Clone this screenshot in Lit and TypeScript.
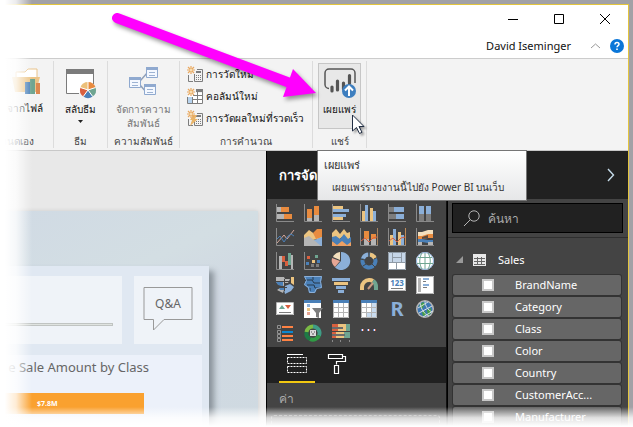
import { LitElement, html, css, svg } from "lit";
import { customElement } from "lit/decorators.js";

type Shape = [fill: string, d: string, stroke?: string, width?: number];

const AXIS: Shape = ["none", "M.5 0v17.5H18", "#8a8a8a"];
const OR = "#e88b3f";
const GR = "#b5b5b5";
const DG = "#7d7d7d";
const BL = "#8bafd8";
const DB = "#4a80b8";
const YE = "#ecc480";
const GN = "#6fa591";
const RE = "#d9603f";

const VISUALS: { name: string; shapes: Shape[] }[] = [
  { name: "Stacked bar chart", shapes: [AXIS, [GR, "M1 3h4v5H1zM1 10h7v5H1z"], [OR, "M5 3h8v5H5zM8 10h8v5H8z"]] },
  { name: "Stacked column chart", shapes: [AXIS, [OR, "M3 5h5v9H3zM10 2h5v9h-5z"], [GR, "M3 14h5v3H3zM10 11h5v6h-5z"]] },
  { name: "Clustered bar chart", shapes: [AXIS, [YE, "M1 2h10v3H1zM1 13h10v3H1z"], [BL, "M1 5h16v3H1zM1 10h13v3H1z"]] },
  { name: "Clustered column chart", shapes: [AXIS, [YE, "M2 7h3v10H2zM10 4h3v13h-3z"], [BL, "M5 1h3v16H5zM13 7h3v10h-3z"]] },
  { name: "100% stacked bar chart", shapes: [AXIS, [DG, "M1 3h5v5H1zM1 10h7v5H1z"], [BL, "M6 3h10v5H6zM8 10h8v5H8z"]] },
  { name: "100% stacked column chart", shapes: [AXIS, [BL, "M3 2h5v8H3zM10 2h5v8h-5z"], [DG, "M3 10h5v7H3zM10 10h5v7h-5z"]] },
  { name: "Line chart", shapes: [AXIS, ["none", "M1 15l7-8 3 4 7-9", "#d5a79a", 1], ["none", "M1 11l3-3 4 6 4-6 3-2 3 2", DB, 1]] },
  { name: "Area chart", shapes: [[YE, "M0 7l5-5 7 5 6-5v8L0 14z"], [OR, "M9 5l4-4h5v8l-6 2z"], [BL, "M0 12l8 1 10-4v9H0z"], [GR, "M0 10l5-2 12 10H0z"]] },
  { name: "Stacked area chart", shapes: [["#eda063", "M0 13l5 3 5-4 5 3 4-2v5H0z"], [YE, "M0 5l4-4 4 5 4-5 3 4 3-1v6l-4 3-4-4-5 4-5-4z"], [DB, "M0 9l4-1 4 3 4-5 4 5 3-2v5l-4 3-5-4-5 4-5-4z"]] },
  { name: "Line and stacked column chart", shapes: [AXIS, [OR, "M4 3h5v8H4zM11 6h5v5h-5z"], [GR, "M4 11h5v6H4zM11 11h5v6h-5z"], ["none", "M1 13l4-3 4 4 4-4 4-1", RE], ["none", "M17.500 0v17", "#a7835e"]] },
  { name: "Line and clustered column chart", shapes: [AXIS, [YE, "M2 7h3v10H2zM10 4h3v13h-3z"], [BL, "M5 1h3v16H5zM13 7h3v10h-3z"], ["none", "M1 13l4-3 4 4 4-4 4-1", RE], ["none", "M17.500 0v17", "#c08a55"]] },
  { name: "Ribbon chart", shapes: [AXIS, ["#f3dfbd", "M2 4h4l6-2h5v5h-5L6 9H2z"], [OR, "M2 8h4l6-2h5v4h-5l-6 1H2z"], [DB, "M2 11h4l6 1h5v3h-5l-6-1H2z"], ["#5d4a3c", "M6 9l6-2v3l-6 1z"], [GR, "M2 14h4v3H2zM12 14h5v3h-5z"]] },
  { name: "Waterfall chart", shapes: [AXIS, [GR, "M3 4h3v13H3zM15 3h2v14h-2z"], [RE, "M6 4h3v6H6zM9 9h3v5H9z"], [GN, "M12 1h3v12h-3z"]] },
  { name: "Scatter chart", shapes: [AXIS, [RE, "M3 4h3v3H3z"], [GN, "M11 3h3v3h-3z"], [DB, "M2 10h3v3H2zM13 8h3v3h-3z"], [YE, "M8 8h3v3H8z"], [DG, "M7 12h3v3H7zM12 12h3v3h-3z"]] },
  { name: "Pie chart", shapes: [[BL, "M9 0a9 9 0 1 1-6 15.500L9 9z"], ["#f3dfbd", "M8 0v8L1 5a9 9 0 0 1 7-5z"], ["#e6a695", "M0 6l8 3-5 6A9 9 0 0 1 0 6z"]] },
  { name: "Donut chart", shapes: [["none", "M9 2.500A6.500 6.500 0 1 1 3 6.500", DB, 4], ["none", "M3 6.500A6.500 6.500 0 0 1 8.500 2.500", BL, 4], ["none", "M10 2.500A6.500 6.500 0 0 1 15 6.500", YE, 4], ["none", "M9 0v5M14 7l4-2M3 14l3-2M15 15l-3-3M0 7l5 1", "#444"]] },
  { name: "Treemap", shapes: [["#fff", "M0 0h18v18H0z"], ["#c6d6e8", "M1 1h3v9H1zM5 1h8v4H5zM5 6h8v4H5zM14 1h3v9h-3z"], ["none", "M.5.5h17v17H.5zM4.500 1v9M5 5.500h8M13.500 1v9M1 10.500h16M8.500 11v6", "#8f9aa5"]] },
  { name: "Map", shapes: [["#fff", "M9 0a9 9 0 1 0 0 18A9 9 0 0 0 9 0z"], ["none", "M9 .5a8.500 8.500 0 1 0 0 17 8.500 8.500 0 0 0 0-17z", BL], ["none", "M2 5.500h14M1 11.500h16M9 1v16M6 1C3 6 3 12 6 17M12 1c3 5 3 11 0 16", GN]] },
  { name: "Filled map", shapes: [[GR, "M0 1h8l1 2h5l-2 4H9l-1 3-5-1-3-3zM1 14l3-2 4 2-1 3z"], [DB, "M0 6h7v4l-5-1zM3 12h6v2H4z"], [BL, "M9 10l5-2 4 3-3 4-6 3-1-4z"], [YE, "M15 1h3v8l-3-2z"], ["none", "M0 5.500h13M2 11.500h9M8.500 3v12", "#444"]] },
  { name: "Shape map", shapes: [[DB, "M0 0h18l-1 6 1 6-5 1-2 4H5l-1-5-4-3 2-5z"], ["none", "M1 4h7l2 3h7M3 9h7l1 3h5M9 1v3M6 12v3", "#27394b"], ["none", "M.5.5h17l-1 5 1 6-5 1-2 4h-5l-1-5-4-3 2-4z", BL]] },
  { name: "Funnel", shapes: [[BL, "M0 2h18v3H0zM4 10h10v3H4zM6 14h6v3H6z"], [YE, "M2 6h14v3H2z"]] },
  { name: "Gauge", shapes: [["none", "M2 14v-3a7 7 0 0 1 7-7", YE, 4], ["none", "M9 4a7 7 0 0 1 4 1", YE, 4], ["none", "M13 5a7 7 0 0 1 3 6v3", GN, 4], ["none", "M8 13L13 7", "#c99b80", 2]] },
  { name: "Card", shapes: [["#fff", "M0 3h18v12H0z"], ["none", "M.5 2.500h17v12H.5z", GR], ["none", "M3 12.500h12", DG]] },
  { name: "Multi-row card", shapes: [["#fff", "M0 0h18v18H0z"], ["none", "M.5.5h17v17H.5z", GR], [GR, "M2 2h3v14H2z"], [BL, "M7 2h6v2H7zM7 8h6v2H7z"], [DG, "M7 5h3v1H7zM7 11h4v1H7z"]] },
  { name: "KPI", shapes: [["#fff", "M0 3h18v12H0z"], ["none", "M.5 2.500h17v12H.5z", GR], [GN, "M3 9l3-4 3 4z"], [RE, "M9 5h6l-3 4z"], ["none", "M3 12.500h12", DG]] },
  { name: "Slicer", shapes: [["#fff", "M0 0h17v18H0z"], [DB, "M0 0h17v3H0z"], [BL, "M3 4h3v3H3z"], [YE, "M3 8h3v3H3z"], ["#e6a695", "M3 12h3v3H3z"], [DG, "M8 8h11l-4 5v5l-3-1v-4z"]] },
  { name: "Table", shapes: [["#fff", "M1 0h16v18H1z"], [DB, "M1 0h16v3H1z"], ["none", "M1.500 3v14.500h15V3M6.500 3v14M11.500 3v14M2 7.500h14M2 12.500h14", GR]] },
  { name: "Matrix", shapes: [["#fff", "M1 0h16v18H1z"], ["#c9dcf0", "M12 3h5v15h-5zM6 13h6v5H6z"], [DB, "M1 0h16v3H1z"], ["none", "M1.500 3v14.500h15V3M6.500 3v14M11.500 3v14M2 7.500h14M2 12.500h14", GR]] },
  { name: "R script visual", shapes: [] },
  { name: "ArcGIS map", shapes: [[GR, "M9 0a9 9 0 1 0 0 18A9 9 0 0 0 9 0z"], ["#3c77b4", "M9 1.500a7.500 7.500 0 1 0 0 15 7.500 7.500 0 0 0 0-15z"], ["#46a044", "M3 6l4-4 2 2-3 5zM11 10l4-2v5l-3 3zM6 12l3-1 1 4-3 1z"], ["none", "M2 8l10-6M3 13L16 6M7 17l10-6M4 3c1 6 4 11 9 13M9 1c0 5 3 9 7 11", "#d5dde3"]] },
  { name: "Chiclet slicer", shapes: [["none", "M1.500 1.500h3v3h-3zM1.500 6.500h3v3h-3zM1.500 10.500h3v3h-3zM1.500 14.500h3v3h-3z", "#909090"], ["#ff8243", "M6 2h11v2H6zM6 15h11v2H6z"], ["#0c87d0", "M6 7h11v2H6z"], ["#ff8243", "M6 11h11v2H6z"]] },
  { name: "Infographic donut", shapes: [["none", "M9 2.500a6.500 6.500 0 0 1 6 9", "#3f9c87", 4], ["none", "M15 11.500a6.500 6.500 0 0 1-9 3.500", "#2f9a44", 4], ["none", "M6 15A6.500 6.500 0 0 1 2.500 8", "#1d7a45", 4], ["none", "M2.500 8A6.500 6.500 0 0 1 9 2.500", "#7bbb45", 4], ["#d8d8d8", "M6 6h6v6H6z"], ["none", "M7 8h1m2 0h1m-3 2h2", "#555"]] },
  { name: "Bullet chart", shapes: [[RE, "M0 0h6v7H0zM0 8h4v6H0z"], [YE, "M6 0h8v7H6zM4 8h8v6H4z"], [GN, "M14 0h4v7h-4zM12 8h6v6h-6z"], ["#6b6b6b", "M0 3h11v2H0zM0 10h13v2H0z"], ["none", "M.5 16v2M8.500 16v2M17.500 16v2", "#8a8a8a"]] },
  { name: "More visuals", shapes: [["#f0f0f0", "M1 5h3v2H1zM7 5h3v2H7zM13 5h3v2h-3z"], ["#5b7fd0", "M1 5h1v2H1zM7 5h1v2H7zM13 5h1v2h-1z"], ["#c0594a", "M3 5h1v2H3zM9 5h1v2H9zM15 5h1v2h-1z"]] },
];

const FIELDS = ["BrandName", "Category", "Class", "Color", "Country", "CustomerAcc...", "Manufacturer"];

const STAR = svg`<path d="M4 0v3M4 5v3M0 4h3M5 4h3M1 1l2 2M7 1L5 3M1 7l2-2M7 7L5 5" stroke="#e9a860" stroke-width="1.200"/><circle cx="4" cy="4" r="1.500" fill="#fbe7c4" stroke="#e9b468" stroke-width=".6"/>`;
const CALC = svg`<path d="M1.500 9v6.500H6M10 3.500h5.500v12h-8V8" fill="none" stroke="#7d7d7d"/><path d="M9 5h5v2H9zM9 9h1v1H9zM11 9h1v1h-1zM13 9h1v1h-1zM9 11h1v1H9zM11 11h1v1h-1zM13 11h1v1h-1zM9 13h1v1H9zM11 13h1v1h-1zM13 13h1v1h-1z" fill="#7d7d7d"/>`;

const reset = css`
  * { box-sizing: border-box; }
  button {
    font: inherit;
    color: inherit;
    background: none;
    border: 0;
    padding: 0;
    margin: 0;
  }
  svg { display: block; flex: none; overflow: visible; }
`;

@customElement("title-bar")
class TitleBar extends LitElement {
  static styles = [reset, css`
    :host { display: block; background: #fff; color: #111; }
    .controls { display: flex; justify-content: flex-end; height: 28px; }
    .controls button { width: 46px; display: grid; place-items: center; }
    .account { display: flex; align-items: center; justify-content: flex-end; height: 25px; padding-right: 4px; }
    .user { font-size: 11px; line-height: 16px; }
    .collapse { margin: 0 10px 0 20px; }
    .help { width: 14px; height: 14px; }
  `];

  render() {
    return html`
      <div class="controls">
        <button aria-label="Minimize"><svg width="10" height="10"><path d="M0 5.500h10" stroke="#000"/></svg></button>
        <button aria-label="Maximize"><svg width="10" height="10"><path d="M.5.5h9v9h-9z" fill="none" stroke="#000"/></svg></button>
        <button aria-label="Close"><svg width="10" height="10"><path d="M0 0l10 10M10 0L0 10" stroke="#000"/></svg></button>
      </div>
      <div class="account">
        <button class="user">David Iseminger</button>
        <button class="collapse" aria-label="Collapse ribbon"><svg width="9" height="5"><path d="M0 5l4.500-4L9 5" fill="none" stroke="#999"/></svg></button>
        <button class="help" aria-label="Help"><svg width="14" height="14" viewBox="0 0 14 14"><circle cx="7" cy="7" r="7" fill="#0a76d8"/><path d="M5 5.500C5 3 9 3 9 5.200 9 6.500 7 6.700 7 8.300" fill="none" stroke="#fff" stroke-width="1.500"/><path d="M6.200 9.500h1.600v1.600H6.200z" fill="#fff"/></svg></button>
      </div>`;
  }
}

@customElement("ribbon-bar")
class RibbonBar extends LitElement {
  static styles = [reset, css`
    :host {
      display: flex;
      height: 93px;
      background: #f3f3f3;
      border-top: 1px solid #ccc;
      border-bottom: 1px solid #c8c8c8;
      color: #111;
      font-size: 10px;
      line-height: 14px;
      white-space: nowrap;
    }
    .group {
      display: flex;
      flex-direction: column;
      flex: none;
      align-items: center;
      justify-content: space-between;
      padding: 4px 0 0;
      margin: 2px 0;
      border-right: 1px solid #dcdcdc;
    }
    .label { color: #444; }
    .custom { width: 54px; align-items: flex-end; }
    .custom .label { padding-right: 19px; }
    .custom .tool { padding-right: 10px; }
    .theme { width: 54px; }
    .relations { width: 72px; }
    .relations .tool { color: #777; }
    .calc { width: 133px; }
    .share { width: 54px; position: relative; padding-top: 2px; }
    .tool { display: flex; flex-direction: column; align-items: center; padding-top: 4px; }
    .tool svg { margin-bottom: 4px; }
    .custom .tool { align-items: flex-end; }
    .tool .caret { margin: 4px 0 0; }
    .list { display: flex; flex-direction: column; gap: 6px; align-self: stretch; padding: 1px 0 0 7px; }
    .list button { display: flex; align-items: center; gap: 3px; height: 16px; }
    .publish {
      width: 43px;
      height: 66px;
      padding-top: 4px;
      background: #e8e8e8;
      border: 1px solid #c6c6c6;
    }
    .tooltip {
      position: absolute;
      z-index: 2;
      top: 89px;
      left: 4px;
      width: 210px;
      height: 51px;
      padding: 7px 6px;
      background: linear-gradient(#fff, #e6e7e8);
      border: 1px solid #767676;
      color: #333;
      font-size: 11px;
      line-height: 14px;
    }
    .tooltip p { margin: 0; }
    .tooltip .detail { margin-top: 8px; padding-left: 8px; font-size: 10px; }
  `];

  render() {
    return html`
      <section class="group custom">
        <button class="tool">
          <svg width="31" height="28" viewBox="0 0 31 28"><path d="M4 9V3h9l3-3h9v9" fill="#fff" stroke="#e9c38a"/><path d="M0 8h28l-4 15H3z" fill="#ecc588"/><path d="M13 13h5v12h-5z" fill="#4a80b8"/><path d="M18 10h5v15h-5z" fill="#6fa591"/><path d="M24 14h4v11h-4z" fill="#dc8850"/></svg>
          จากไฟล์
        </button>
        <span class="label">หนดเอง</span>
      </section>
      <section class="group theme">
        <button class="tool">
          <svg width="30" height="29" viewBox="0 0 30 29"><path d="M.5.5h27V15M.5.500v24H13" fill="#fff" stroke="#7b7b7b"/><path d="M0 0h28v5H0z" fill="#7b7b7b"/><path d="M1 5h26v10L13 24H1z" fill="#fff"/>
            <path d="M22 21V13a8 8 0 0 1 7.600 5.500z" fill="#e88b3f"/><path d="M22 21l7.600-2.500a8 8 0 0 1-2.900 9z" fill="#6fa591"/><path d="M22 21l4.700 6.500a8 8 0 0 1-9.400 0z" fill="#4a80b8"/><path d="M22 21l-4.700 6.500a8 8 0 0 1-2.900-9z" fill="#d9603f"/><path d="M22 21l-7.600-2.500A8 8 0 0 1 22 13z" fill="#ecc07a"/><path d="M22 21v-8M22 21l7.600-2.500M22 21l4.700 6.500M22 21l-4.700 6.500M22 21l-7.600-2.500" stroke="#fff"/></svg>
          สลับธีม
          <svg class="caret" width="5" height="3"><path d="M0 0h5L2.500 3z" fill="#222"/></svg>
        </button>
        <span class="label">ธีม</span>
      </section>
      <section class="group relations">
        <button class="tool">
          <svg width="30" height="29" viewBox="0 0 30 29"><path d="M11 12l8-9M11 16l7 8" stroke="#8f9fb8" stroke-width="1.500"/><g fill="#f4f8ff" stroke="#8fa9cf"><path d="M.5 8.500h11v10H.5zM17.500-1.500h11v10h-11zM15.500 15.500h11v10h-11z"/></g><path d="M0 8h12v3H0zM17-2h12v3H17zM15 15h12v3H15z" fill="#8fa9cf"/><path d="M3 13.500h6M3 16.500h6M20 3.500h6M20 6.500h6M18 20.500h6M18 23.500h6" stroke="#9db3d3"/></svg>
          <span>จัดการความ<br>สัมพันธ์</span>
        </button>
        <span class="label">ความสัมพันธ์</span>
      </section>
      <section class="group calc">
        <div class="list">
          <button><svg width="16" height="16" viewBox="0 0 16 16">${CALC}${STAR}</svg>การวัดใหม่</button>
          <button><svg width="16" height="16" viewBox="0 0 16 16"><path d="M1 5h15v11H1z" fill="#fff"/><path d="M1 9h5v7H1z" fill="#b7d3ee"/><path d="M.5 9v6.500h15V1.500H9M5.500 9v6M10.500 4v11M6 7.500h9M6 11.500h9" fill="none" stroke="#7d7d7d"/><path d="M9 1h7v3H9z" fill="#7d7d7d"/>${STAR}</svg>คอลัมน์ใหม่</button>
          <button><svg width="16" height="16" viewBox="0 0 16 16">${CALC}<path d="M6 5h4L8 9h3l-8 7 2-6H3z" fill="#e9b468"/>${STAR}</svg>การวัดผลใหม่ที่รวดเร็ว</button>
        </div>
        <span class="label">การคำนวณ</span>
      </section>
      <section class="group share">
        <button class="tool publish" aria-describedby="publish-tip">
          <svg width="32" height="30" viewBox="0 0 32 30"><path d="M5 20.500a4 4 0 0 1-4-4V5a4 4 0 0 1 4-4h22a4 4 0 0 1 4 4v10" fill="none" stroke="#555" stroke-width="1.500"/><path d="M8 19v4M13.500 13v9M19.500 15v6M25.500 7.500v8" stroke="#555" stroke-width="3.200" stroke-linecap="round"/><circle cx="25" cy="23" r="7" fill="#3d7ebf"/><path d="M25 28v-9M21 22.500l4-4 4 4" fill="none" stroke="#fff" stroke-width="2"/></svg>
          เผยแพร่
        </button>
        <span class="label">แชร์</span>
        <div class="tooltip" id="publish-tip" role="tooltip">
          <p>เผยแพร่</p>
          <p class="detail">เผยแพร่รายงานนี้ไปยัง Power BI บนเว็บ</p>
        </div>
      </section>`;
  }
}

@customElement("report-canvas")
class ReportCanvas extends LitElement {
  static styles = [reset, css`
    :host { display: flex; background: #e8e8e8; padding: 60px 8px 0 0; overflow: hidden; }
    .page {
      flex: 1;
      display: flex;
      padding: 55px 49px 0 0;
      background: linear-gradient(155deg, #d0dae4, #d3dee3 35%, #d0d8e2 55%, #cfdae1);
      box-shadow: 0 0 4px #ccc;
    }
    .board {
      flex: 1;
      display: flex;
      flex-direction: column;
      gap: 11px;
      padding: 10px 7px 0 0;
      background: #e0e8f2;
      box-shadow: 5px 5px 6px #8a939b;
      color: #666;
    }
    .row { display: flex; gap: 12px; }
    .tile { height: 68px; background: #eff3f8; }
    .wide { flex: 1; display: flex; align-items: flex-end; padding: 0 9px 18px 0; }
    .rule { flex: 1; height: 3px; background: #dfe3e0; border: 1px solid #c0c4c2; }
    .qa { width: 68px; position: relative; padding: 10px 9px; }
    .qa svg { width: 50px; height: 46px; }
    .qa span { position: absolute; top: 18px; left: 0; width: 68px; text-align: center; font-size: 12px; line-height: 20px; }
    .chart { flex: 1; background: #ecf1fa; }
    h2 {
      display: flex;
      justify-content: flex-end;
      margin: 0;
      padding: 2px 53px 0 0;
      white-space: nowrap;
      font-size: 13px;
      line-height: 20px;
      font-weight: 400;
    }
    .bar { margin: 16px 58px 0 0; height: 21px; background: #faa12f; color: #fff; font-size: 7px; font-weight: 700; line-height: 21px; padding-left: 37px; }
  `];

  render() {
    return html`
      <div class="page">
        <div class="board">
          <div class="row">
            <div class="tile wide"><div class="rule"></div></div>
            <div class="tile qa">
              <svg viewBox="0 0 50 46"><path d="M1 1.500h48v32H21L10.500 44V33.500H1z" fill="none" stroke="#999"/></svg>
              <span>Q&amp;A</span>
            </div>
          </div>
          <div class="chart">
            <h2>e Sale Amount by Class</h2>
            <div class="bar">$7.8M</div>
          </div>
        </div>
      </div>`;
  }
}

@customElement("visuals-pane")
class VisualsPane extends LitElement {
  static styles = [reset, css`
    :host { display: flex; flex-direction: column; background: #444; border-left: 1px solid #000; border-right: 1px solid #111; color: #fff; overflow: hidden; }
    header { flex: none; height: 48px; padding-left: 12px; background: #212121; display: flex; align-items: center; }
    h3 { margin: 0; font-size: 13px; line-height: 20px; font-weight: 700; }
    .grid { display: grid; grid-template-columns: repeat(6, 18px); gap: 6px 10px; padding: 5px 9px; }
    .grid button { width: 18px; height: 18px; display: grid; }
    .grid svg, .grid span { grid-area: 1 / 1; }
    .digits { font-size: 8px; font-weight: 700; line-height: 14px; color: #4a80b8; text-align: center; }
    .letter { font-size: 20px; font-weight: 700; line-height: 18px; color: #8bafd8; text-align: center; }
    .tabs { flex: none; display: flex; height: 36px; gap: 4px; padding-left: 12px; background: #212121; }
    .tabs button { width: 36px; display: grid; place-items: center; border-bottom: 2px solid transparent; }
    .tabs .active { border-color: #f2c811; }
    .values { margin: 0; padding: 7px 12px; font-size: 12px; line-height: 18px; color: #aaa; }
    .well { height: 30px; margin: 0 6px 0 4px; border: 1px dashed #888; border-radius: 3px; }
  `];

  render() {
    return html`
      <header><h3>การจัด</h3></header>
      <div class="grid">
        ${VISUALS.map(v => html`
          <button aria-label=${v.name}>
            <svg width="18" height="18" viewBox="0 0 18 18">
              ${v.shapes.map(([fill, d, stroke, width]) => svg`<path fill=${fill} d=${d} stroke=${stroke ?? "none"} stroke-width=${width ?? 1} />`)}
            </svg>
            ${v.name === "Card" ? html`<span class="digits">123</span>` : ""}
            ${v.name === "R script visual" ? html`<span class="letter">R</span>` : ""}
          </button>`)}
      </div>
      <div class="tabs">
        <button class="active" aria-label="Fields"><svg width="20" height="20" viewBox="0 0 20 20"><path d="M0 .5h16" stroke="#fff"/><path d="M.5 3.500h19v6H.5zM.5 12.500h19v6H.5z" fill="none" stroke="#fff" stroke-dasharray="2 1"/></svg></button>
        <button aria-label="Format"><svg width="18" height="20" viewBox="0 0 18 20"><path d="M.5.500h14v4H.5zM14.500 2.500h3v5h-9v3M6.500 11.500h4v8h-4z" fill="none" stroke="#fff" stroke-width="1.200"/></svg></button>
      </div>
      <p class="values">ค่า</p>
      <div class="well"></div>`;
  }
}

@customElement("fields-pane")
class FieldsPane extends LitElement {
  static styles = [reset, css`
    :host { display: flex; flex-direction: column; background: #444; border-left: 1px solid #000; color: #fff; overflow: hidden; }
    header { flex: none; height: 48px; padding-right: 14px; background: #212121; display: flex; align-items: center; justify-content: flex-end; }
    .search { flex: none; display: flex; align-items: center; gap: 8px; height: 30px; margin: 4px 5px 4px 4px; padding-left: 11px; background: #212121; border: 1px solid #000; }
    .search input { flex: 1; min-width: 0; background: none; border: 0; outline: 0; padding: 0; font: inherit; font-size: 12px; color: #fff; }
    .search input::placeholder { color: #aaa; opacity: 1; }
    .table { flex: none; display: flex; align-items: center; height: 38px; padding: 6px 0 0 8px; border-top: 1px solid #2e2e2e; font-size: 11px; width: 100%; }
    .table .grid { margin: 0 12px 0 10px; }
    ul { list-style: none; margin: 0; padding: 0 7px 0 5px; display: flex; flex-direction: column; gap: 2px; }
    label { display: flex; align-items: center; gap: 21px; height: 20px; padding-left: 29px; background: #666; border-radius: 2px; box-shadow: 0 0 0 1px #333; font-size: 11px; line-height: 20px; }
    input[type="checkbox"] { appearance: none; width: 12px; height: 12px; margin: 0; background: #fff; border: 2px solid #c8c8c8; }
  `];

  render() {
    return html`
      <header><button aria-label="Expand pane"><svg width="7" height="12"><path d="M1 0l5.500 6L1 12" fill="none" stroke="#c6dcea" stroke-width="1.400"/></svg></button></header>
      <div class="search">
        <svg width="16" height="16" viewBox="0 0 16 16"><circle cx="10" cy="6" r="5.200" fill="none" stroke="#b4b4b4"/><path d="M6.500 9.500L0 16" stroke="#b4b4b4"/></svg>
        <input type="search" placeholder="ค้นหา" aria-label="ค้นหา">
      </div>
      <button class="table" aria-expanded="true">
        <svg width="7" height="7"><path d="M7 0v7H0z" fill="#999"/></svg>
        <svg class="grid" width="13" height="12"><path d="M0 0h13v12H0z" fill="#e8e8e8"/><path d="M1 4.500h11M1 7.500h11M1 10.500h11M4.500 3v8M8.500 3v8" stroke="#666"/></svg>
        Sales
      </button>
      <ul>
        ${FIELDS.map(name => html`<li><label><input type="checkbox">${name}</label></li>`)}
      </ul>`;
  }
}

@customElement("app-root")
class AppRoot extends LitElement {
  static styles = [reset, css`
    :host {
      display: block;
      position: relative;
      height: 100vh;
      overflow: hidden;
      padding: 4px 4px 0 0;
      background: #a2a1a6;
      font-family: "Noto Sans", "Open Sans", sans-serif;
    }
    .window {
      display: flex;
      flex-direction: column;
      height: 100%;
      border-top: 1px solid #e3c53d;
      border-right: 1px solid #e3c53d;
    }
    .window > * { flex: none; }
    .window > main {
      flex: 1;
      min-height: 0;
      display: grid;
      grid-template-columns: 1fr 181px 181px;
    }
    .fade { position: absolute; pointer-events: none; z-index: 3; }
    .left { inset: 0 auto 0 0; width: 32px; background: linear-gradient(90deg, #fff 15%, #fffc 50%, #fff0); }
    .bottom { inset: auto 0 0 0; height: 24px; background: linear-gradient(#fff0, #fffc 45%, #fff 80%); }
    .pointer { position: absolute; z-index: 4; top: 0; left: 0; pointer-events: none; }
    .arrow { filter: drop-shadow(2px 3px 2px #0006); }
    .cursor { filter: drop-shadow(2px 2px 1px #0005); }
  `];

  render() {
    return html`
      <div class="window">
        <title-bar></title-bar>
        <ribbon-bar></ribbon-bar>
        <main>
          <report-canvas></report-canvas>
          <visuals-pane></visuals-pane>
          <fields-pane></fields-pane>
        </main>
      </div>
      <div class="fade left"></div>
      <div class="fade bottom"></div>
      <svg class="pointer" width="380" height="140" viewBox="0 0 380 140" aria-hidden="true">
        <g class="arrow"><path d="M117 18L290 83" stroke="#ff00fe" stroke-width="10" stroke-linecap="round"/><path d="M293 69l23 24-33 4z" fill="#ff00fe"/></g>
        <path class="cursor" d="M352.500 115v16l4-3.500 3 6 2.500-1.200-3-5.800h5z" fill="#fff" stroke="#222f45"/>
      </svg>`;
  }
}
